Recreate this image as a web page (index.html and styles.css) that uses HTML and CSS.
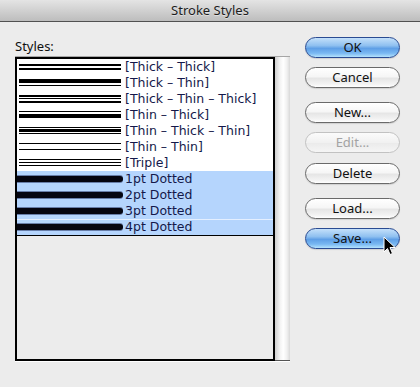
FILE: index.html
```html
<!DOCTYPE html>
<html lang="en">
<head>
    <meta charset="UTF-8">
    <title>Stroke Styles</title>
    <link rel="stylesheet" href="styles.css">
</head>
<body>
    <div class="dialog">
        <div class="titlebar">Stroke Styles</div>
        <div class="content">
            <div class="styles-pane">
                <div class="label">Styles:</div>
                <div class="frame">
                    <div class="list">
                        <div class="rows">
                            <div class="row">
                                <svg class="sample" width="106" height="16"><rect x="2" y="5" width="102" height="2"/><rect x="2" y="9" width="102" height="2"/></svg>
                                <span class="name">[Thick – Thick]</span>
                            </div>
                            <div class="row">
                                <svg class="sample" width="106" height="16"><rect x="2" y="4" width="102" height="4"/><rect x="2" y="10" width="102" height="1"/></svg>
                                <span class="name">[Thick – Thin]</span>
                            </div>
                            <div class="row">
                                <svg class="sample" width="106" height="16"><rect x="2" y="4" width="102" height="2"/><rect x="2" y="7" width="102" height="1"/><rect x="2" y="10" width="102" height="2"/></svg>
                                <span class="name">[Thick – Thin – Thick]</span>
                            </div>
                            <div class="row">
                                <svg class="sample" width="106" height="16"><rect x="2" y="4" width="102" height="1"/><rect x="2" y="7" width="102" height="4"/></svg>
                                <span class="name">[Thin – Thick]</span>
                            </div>
                            <div class="row">
                                <svg class="sample" width="106" height="16"><rect x="2" y="4" width="102" height="1"/><rect x="2" y="6" width="102" height="3"/><rect x="2" y="10" width="102" height="1"/></svg>
                                <span class="name">[Thin – Thick – Thin]</span>
                            </div>
                            <div class="row">
                                <svg class="sample" width="106" height="16"><rect x="2" y="4" width="102" height="1"/><rect x="2" y="10" width="102" height="1"/></svg>
                                <span class="name">[Thin – Thin]</span>
                            </div>
                            <div class="row">
                                <svg class="sample" width="106" height="16"><rect x="2" y="4" width="102" height="1"/><rect x="2" y="7" width="102" height="1"/><rect x="2" y="10" width="102" height="1"/></svg>
                                <span class="name">[Triple]</span>
                            </div>
                            <div class="row selected">
                                <span class="sample"><span class="dots"></span></span>
                                <span class="name">1pt Dotted</span>
                            </div>
                            <div class="row selected">
                                <span class="sample"><span class="dots"></span></span>
                                <span class="name">2pt Dotted</span>
                            </div>
                            <div class="row selected">
                                <span class="sample"><span class="dots"></span></span>
                                <span class="name">3pt Dotted</span>
                            </div>
                            <div class="row selected split">
                                <span class="sample"><span class="dots"></span></span>
                                <span class="name">4pt Dotted</span>
                            </div>
                        </div>
                    </div>
                    <div class="scrollbar"></div>
                </div>
            </div>
            <div class="buttons">
                <button class="btn default">OK</button>
                <button class="btn gap-s">Cancel</button>
                <button class="btn gap-l">New...</button>
                <button class="btn gap-s" disabled>Edit...</button>
                <button class="btn gap-m">Delete</button>
                <button class="btn gap-l">Load...</button>
                <button class="btn default gap-s">Save...</button>
                <svg class="cursor" width="13" height="20" viewBox="0 0 13 20">
                    <path d="M1 1 L1 16 L4.5 12.5 L7 18.5 L9.5 17.5 L7 11.5 L12 11.5 Z" fill="#000" stroke="#fff" stroke-width="1" stroke-linejoin="round"/>
                </svg>
            </div>
        </div>
    </div>
</body>
</html>
```

FILE: styles.css
```css
body {
    margin: 0;
    background-color: #ececec;
    font-family: "Noto Sans", "DejaVu Sans", sans-serif;
    color: #111;
}
.dialog {
    width: 420px;
    height: 387px;
    background-color: #ececec;
}
.titlebar {
    height: 21px;
    line-height: 21px;
    text-align: center;
    font-size: 13px;
    color: #1c1c1c;
    text-shadow: 0 1px 0 rgba(255,255,255,0.45);
    background: linear-gradient(to bottom, #e4e4e4, #bdbdbd);
    border-bottom: 1px solid #515151;
}
.content {
    display: flex;
}
.styles-pane {
    padding: 16px 0 0 15px;
}
.label {
    font-size: 13px;
    line-height: 16px;
    margin-bottom: 2px;
}
.frame {
    display: flex;
    width: 275px;
    border-top: 1px solid #a6a6a6;
    border-bottom: 1px solid #fff;
}
.list {
    width: 256px;
    height: 300px;
    border: 2px solid #000;
    background-color: #ececec;
}
.rows {
    background-color: #fff;
    border-bottom: 1px solid #000;
}
.row {
    display: flex;
    align-items: center;
    height: 16px;
}
.row.selected {
    background-color: #b5d5fd;
}
.row.split {
    box-shadow: inset 0 1px 0 #e4efff;
}
.sample {
    display: block;
    width: 106px;
    height: 16px;
    flex: none;
    fill: #000;
}
.dots {
    display: block;
    height: 6px;
    margin-top: 5px;
    background-color: #050510;
    box-shadow: 0 -1px 0 rgba(40,55,100,0.55), 0 1px 0 rgba(40,55,100,0.55);
    border-radius: 0 4px 4px 0;
}
.name {
    margin-left: 2px;
    font-family: "DejaVu Sans", sans-serif;
    font-size: 12.5px;
    line-height: 16px;
    color: #14184a;
    white-space: nowrap;
}
.scrollbar {
    width: 15px;
    height: 304px;
    background: linear-gradient(to right, #cfcfcf, #f4f4f4 35%, #fff 55%, #f0f0f0 80%, #d8d8d8);
    border-bottom: 1px solid #555;
    box-sizing: border-box;
}
.buttons {
    position: relative;
    display: flex;
    flex-direction: column;
    padding: 15px 0 0 15px;
}
.btn {
    width: 95px;
    height: 21px;
    padding: 0;
    font-family: "Noto Sans", "DejaVu Sans", sans-serif;
    font-size: 13px;
    line-height: 19px;
    color: #111;
    border: 1px solid #6a6a6a;
    border-radius: 11px;
    background: linear-gradient(to bottom, #ffffff 0%, #f6f6f6 45%, #e6e6e6 55%, #f3f3f3 85%, #ffffff 100%);
    box-shadow: 0 1px 1px rgba(0,0,0,0.12);
}
.btn.default {
    border-color: #2a4b92;
    background: linear-gradient(to bottom, #c4e0fa 0%, #8fc0f0 40%, #5f9fe6 55%, #79b8f2 80%, #b4e2fd 100%);
}
.btn:disabled {
    color: #a3a3a3;
    border-color: #c2c2c2;
    background: linear-gradient(to bottom, #fbfbfb, #f1f1f1 50%, #ebebeb 55%, #f5f5f5);
    box-shadow: none;
}
.gap-s {
    margin-top: 9px;
}
.gap-m {
    margin-top: 10px;
}
.gap-l {
    margin-top: 14px;
}
.cursor {
    position: absolute;
    left: 93px;
    top: 214px;
}
```
